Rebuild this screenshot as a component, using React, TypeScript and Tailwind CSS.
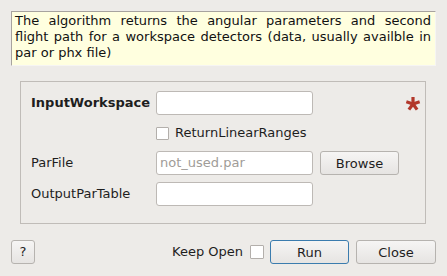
import React from 'react';

const font = { fontFamily: '"DejaVu Sans", sans-serif' };

const Star: React.FC = () => {
  const arms = [-90, -18, 54, 126, 198].map(a => {
    const r = (a * Math.PI) / 180;
    return { x: 8 + Math.cos(r) * 7, y: 8 + Math.sin(r) * 7 };
  });
  return (
    <svg width="16" height="16" viewBox="0 0 16 16">
      {arms.map((p, i) => (
        <line key={i} x1="8" y1="8" x2={p.x} y2={p.y} stroke="#b2382b" strokeWidth={3.2} strokeLinecap="butt" />
      ))}
    </svg>
  );
};

const Btn: React.FC<{ w: string; primary?: boolean; children: React.ReactNode }> = ({ w, primary, children }) => (
  <button
    className={
      primary
        ? `${w} h-[24px] rounded-[3px] border border-[#3b7cae] bg-gradient-to-b from-[#f6f5f4] to-[#e6e4e2] text-[13px] text-[#1e1e1e]`
        : `${w} h-[24px] rounded-[3px] border border-[#b6b3af] bg-gradient-to-b from-[#f6f5f4] to-[#e6e4e2] text-[13px] text-[#1e1e1e]`
    }
  >
    {children}
  </button>
);

const Field: React.FC<{ placeholder?: string }> = ({ placeholder }) => (
  <div className="w-[157px] h-[24px] rounded-[3px] border border-[#bdb9b5] bg-white px-[3px] flex items-center text-[13px] text-[#a09c98]">
    {placeholder}
  </div>
);

export default function App() {
  return (
    <div className="w-[447px] h-[276px] bg-[#edebe8] pt-[11px] px-[11px] flex flex-col text-[#1e1e1e]" style={font}>
      <div className="h-[55px] w-[425px] border-t border-l border-[#a7a39f] border-r border-b border-r-[#f6f5f3] border-b-[#f6f5f3] bg-[#ffffdf] pl-[3px] pr-[4px] pt-[1px] text-[13px] leading-[16px] text-justify text-[#111]">
        The algorithm returns the angular parameters and second flight path for a workspace detectors (data, usually availble in par or phx file)
      </div>

      <div className="mt-[15px] ml-[9px] w-[406px] h-[143px] border border-[#c0bcb8] pt-[9px] pl-[10px] flex flex-col">
        <div className="flex items-center h-[24px]">
          <div className="w-[125px] font-bold text-[13px]">InputWorkspace</div>
          <Field />
          <div className="ml-[92px] mt-[2px]"><Star /></div>
        </div>
        <div className="flex items-center h-[24px] mt-[6px] pl-[125px]">
          <div className="w-[13px] h-[13px] border border-[#b3afab] bg-white rounded-[1px]" />
          <span className="ml-[6px] text-[13px]">ReturnLinearRanges</span>
        </div>
        <div className="flex items-center h-[24px] mt-[6px]">
          <div className="w-[125px] text-[13px]">ParFile</div>
          <Field placeholder="not_used.par" />
          <div className="ml-[7px]"><Btn w="w-[79px]">Browse</Btn></div>
        </div>
        <div className="flex items-center h-[24px] mt-[7px]">
          <div className="w-[125px] text-[13px]">OutputParTable</div>
          <Field />
        </div>
      </div>

      <div className="mt-[16px] flex items-center h-[24px] w-[425px]">
        <Btn w="w-[24px]">?</Btn>
        <div className="flex-1" />
        <span className="whitespace-nowrap shrink-0 text-[13px]">Keep Open</span>
        <div className="shrink-0 ml-[7px] w-[14px] h-[14px] border border-[#b3afab] bg-white rounded-[1px]" />
        <div className="shrink-0 ml-[6px]"><Btn w="w-[79px]" primary>Run</Btn></div>
        <div className="shrink-0 ml-[7px]"><Btn w="w-[80px]">Close</Btn></div>
      </div>
    </div>
  );
}
